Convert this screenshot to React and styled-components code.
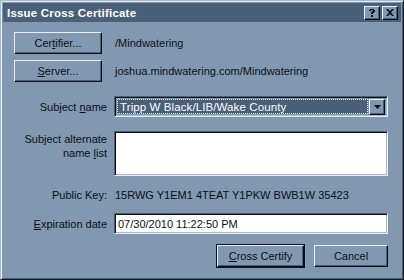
import styled, { createGlobalStyle } from "styled-components";

const Global = createGlobalStyle`
  html, body {
    margin: 0;
    padding: 0;
    background: #8198b0;
  }
  body {
    font-family: "Liberation Sans", Arial, sans-serif;
    font-size: 11px;
    color: #0a1018;
  }
`;

const Window = styled.div`
  width: 404px;
  height: 280px;
  box-sizing: border-box;
  background: #8198b0;
  border-top: 1px solid #a9bacb;
  border-left: 1px solid #a9bacb;
  border-right: 1px solid #101820;
  border-bottom: 1px solid #101820;
  box-shadow: inset 1px 1px 0 #e8eef4, inset -1px -1px 0 #4a5f76;
  padding: 2px;
  display: flex;
  flex-direction: column;
`;

const TitleBar = styled.div`
  height: 19px;
  background: #4a5f78;
  display: flex;
  align-items: center;
  padding: 0 3px 0 4px;
  color: #ffffff;
  font-weight: bold;
  font-size: 11.5px;
`;

const TitleText = styled.div`
  flex: 1;
  padding-top: 1px;
  letter-spacing: 0.2px;
`;

const CapButton = styled.div`
  width: 16px;
  height: 14px;
  box-sizing: border-box;
  background: #8198b0;
  border-top: 1px solid #e8eef4;
  border-left: 1px solid #e8eef4;
  border-right: 1px solid #0a1018;
  border-bottom: 1px solid #0a1018;
  box-shadow: inset -1px -1px 0 #4a5f76;
  margin-left: ${(p) => (p.$gap ? "2px" : "0")};
  display: flex;
  align-items: center;
  justify-content: center;
  color: #0a1018;
`;

const Body = styled.div`
  flex: 1;
  padding: 10px 13px 0 11px;
  display: flex;
  flex-direction: column;
`;

const Row = styled.div`
  display: grid;
  grid-template-columns: 93px 1fr;
  column-gap: 7px;
  align-items: ${(p) => (p.$top ? "start" : "center")};
  margin-top: ${(p) => p.$mt || 0}px;
`;

const Label = styled.div`
  text-align: right;
  line-height: 14px;
  padding-top: ${(p) => (p.$top ? 1 : 0)}px;
`;

const Value = styled.div`
  padding-left: 1px;
`;

const Button = styled.div`
  width: ${(p) => p.$w}px;
  height: 22px;
  box-sizing: border-box;
  background: #8198b0;
  border-top: 1px solid #e8eef4;
  border-left: 1px solid #e8eef4;
  border-right: 1px solid #0a1018;
  border-bottom: 1px solid #0a1018;
  box-shadow: inset -1px -1px 0 #4a5f76;
  display: flex;
  align-items: center;
  justify-content: center;
  outline: ${(p) => (p.$default ? "1px solid #0a1018" : "none")};
  outline-offset: 0;
`;

const Sunken = styled.div`
  height: ${(p) => p.$h}px;
  box-sizing: border-box;
  border-top: 1px solid #4a5f76;
  border-left: 1px solid #4a5f76;
  border-right: 1px solid #e8eef4;
  border-bottom: 1px solid #e8eef4;
  box-shadow: inset 1px 1px 0 #0a1018, inset -1px -1px 0 #a9bacb;
  background: ${(p) => p.$bg || "#ffffff"};
  display: flex;
  align-items: ${(p) => (p.$top ? "flex-start" : "center")};
  padding: 2px;
`;

const Selected = styled.div`
  flex: 1;
  height: 15px;
  background: #4a5f78;
  color: #ffffff;
  outline: 1px dotted #e8eef4;
  outline-offset: -1px;
  display: flex;
  align-items: center;
  padding-left: 3px;
  margin-right: 1px;
  font-size: 11.5px;
  letter-spacing: 0.1px;
`;

const DropButton = styled.div`
  width: 16px;
  height: 16px;
  box-sizing: border-box;
  background: #8198b0;
  border-top: 1px solid #e8eef4;
  border-left: 1px solid #e8eef4;
  border-right: 1px solid #0a1018;
  border-bottom: 1px solid #0a1018;
  box-shadow: inset -1px -1px 0 #4a5f76;
  display: flex;
  align-items: center;
  justify-content: center;
`;

const FieldText = styled.div`
  padding-left: 1px;
`;

const Actions = styled.div`
  display: flex;
  justify-content: flex-end;
  gap: 10px;
  margin-top: 11px;
`;

const Key = styled.span`
  text-decoration: underline;
`;

export default function App() {
  return (
    <>
      <Global />
      <Window>
        <TitleBar>
          <TitleText>Issue Cross Certificate</TitleText>
          <CapButton>
            <svg width="8" height="9" viewBox="0 0 8 9">
              <path d="M1 2h1V1h4v1h1v2H6v1H5v1H3V4h1V3h1V2H3v1H1z M3 7h2v2H3z" fill="#0a1018" />
            </svg>
          </CapButton>
          <CapButton $gap>
            <svg width="8" height="7" viewBox="0 0 8 7">
              <path d="M0 0h2l2 2 2-2h2L5 3.5 8 7H6L4 5 2 7H0l3-3.5z" fill="#0a1018" />
            </svg>
          </CapButton>
        </TitleBar>
        <Body>
          <Row>
            <Button $w={88}>
              <span>
                Cer<Key>t</Key>ifier...
              </span>
            </Button>
            <Value>/Mindwatering</Value>
          </Row>
          <Row $mt={6}>
            <Button $w={88}>
              <span>
                <Key>S</Key>erver...
              </span>
            </Button>
            <Value>joshua.mindwatering.com/Mindwatering</Value>
          </Row>
          <Row $mt={14}>
            <Label>
              Subject <Key>n</Key>ame
            </Label>
            <Sunken $h={21} $bg="#8198b0">
              <Selected>Tripp W Black/LIB/Wake County</Selected>
              <DropButton>
                <svg width="7" height="4" viewBox="0 0 7 4">
                  <path d="M0 0h7L3.5 4z" fill="#0a1018" />
                </svg>
              </DropButton>
            </Sunken>
          </Row>
          <Row $mt={14} $top>
            <Label $top>
              Subject alternate
              <br />
              name <Key>l</Key>ist
            </Label>
            <Sunken $h={45} $top />
          </Row>
          <Row $mt={12}>
            <Label>Public Key:</Label>
            <Value>15RWG Y1EM1 4TEAT Y1PKW BWB1W 35423</Value>
          </Row>
          <Row $mt={11}>
            <Label>
              <Key>E</Key>xpiration date
            </Label>
            <Sunken $h={21}>
              <FieldText>07/30/2010 11:22:50 PM</FieldText>
            </Sunken>
          </Row>
          <Actions>
            <Button $w={87} $default>
              <span>
                <Key>C</Key>ross Certify
              </span>
            </Button>
            <Button $w={74}>Cancel</Button>
          </Actions>
        </Body>
      </Window>
    </>
  );
}
